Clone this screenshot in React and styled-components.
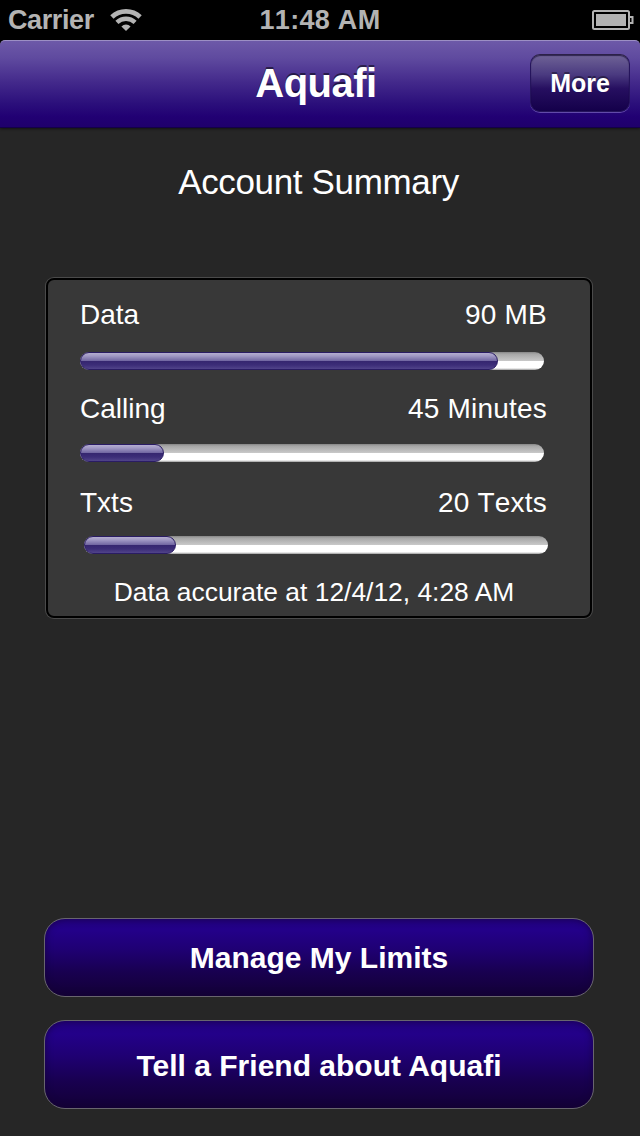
import React from 'react';
import styled, { createGlobalStyle } from 'styled-components';

const GlobalStyle = createGlobalStyle`
  * {
    box-sizing: border-box;
  }

  body {
    margin: 0;
    background: #262626;
    font-family: "Liberation Sans", Arial, Helvetica, sans-serif;
  }
`;

const Screen = styled.div`
  display: flex;
  flex-direction: column;
  width: 640px;
  height: 1136px;
  background: #262626;
  color: #fff;
  overflow: hidden;
`;

/* also the black that shows behind the rounded nav corners */
const Top = styled.header`
  background: #000;
`;

const StatusBar = styled.div`
  display: grid;
  grid-template-columns: 1fr auto 1fr;
  align-items: center;
  height: 40px;
  padding: 0 6px;
  color: #b3b3b3;
  font-size: 27px;
  font-weight: bold;
  line-height: 40px;
`;

const Carrier = styled.div`
  display: flex;
  align-items: center;
  gap: 16px;
  padding-left: 2px;
  letter-spacing: -0.4px;
`;

const Clock = styled.div`
  font-kerning: none;
  letter-spacing: 0.3px;
`;

const BatteryIcon = styled.svg`
  justify-self: end;
`;

const NavBar = styled.nav`
  display: grid;
  grid-template-columns: 1fr auto 1fr;
  align-items: center;
  height: 88px;
  padding: 0 10px 2px 2px;
  border-top: 1px solid #9c8fc4;
  border-bottom: 1px solid #14004a;
  border-radius: 5px 5px 0 0;
  background: linear-gradient(#6d59a8 0%, #5f4a9f 20%, #43298b 48%, #2b0f7b 73%, #210073 88%, #1f006c 100%);
  box-shadow: 0 1px 3px rgba(0, 0, 0, 0.5);
`;

const Title = styled.h1`
  grid-column: 2;
  margin: 0;
  font-size: 40px;
  line-height: 48px;
  letter-spacing: -0.5px;
  text-shadow: 0 -2px 0 rgba(0, 0, 0, 0.5);
`;

const MoreButton = styled.button`
  justify-self: end;
  width: 100px;
  height: 58px;
  padding: 1px 0 0;
  border: 1px solid #25145c;
  border-top-color: #2c2148;
  border-radius: 10px;
  background: linear-gradient(#6f6396 0%, #4a3a80 35%, #260f60 60%, #14004a 100%);
  box-shadow: inset 0 1px 1px rgba(20, 10, 50, 0.7), 0 1px 0 rgba(140, 120, 205, 0.6);
  color: #fff;
  font: bold 25px "Liberation Sans", Arial, sans-serif;
  text-shadow: 0 -2px 0 rgba(0, 0, 0, 0.4);
`;

const Main = styled.main`
  display: flex;
  flex: 1;
  flex-direction: column;
  padding: 34px 46px 27px 44px;
`;

const Heading = styled.h2`
  margin: 0 1px 76px 0;
  font-size: 35px;
  font-weight: normal;
  line-height: 40px;
  letter-spacing: -0.35px;
  text-align: center;
`;

const Panel = styled.section`
  width: 546px;
  height: 340px;
  margin-left: 2px;
  padding: 19px 42px 0 32px;
  border: 2px solid #000;
  border-radius: 8px;
  background: #383838;
  box-shadow: 0 0 0 1px #4a4a4a;
`;

const Meter = styled.div`
  display: flex;
  flex-direction: column;
  gap: ${(props) => props.$gap}px;
  margin-bottom: ${(props) => props.$after}px;
`;

const MeterText = styled.div`
  display: flex;
  justify-content: space-between;
  width: 467px;
  font-size: 28px;
  line-height: 32px;
`;

const Value = styled.span`
  font-kerning: none;
  letter-spacing: 0.2px;
`;

const Track = styled.div`
  width: 464px;
  height: 18px;
  margin-left: ${(props) => props.$shift || 0}px;
  border-radius: 9px;
  background: linear-gradient(#858585 0, #a6a6a6 2px, #c9c9c9 9px, #fff 9px, #fff 16px, #9a9a9a 18px);
`;

const Fill = styled.div`
  height: 18px;
  border: 1px solid #2a1c63;
  border-radius: 9px;
  background: linear-gradient(#b5aed0 0, #a098c4 3px, #6f64a0 8px, #35266f 8px, #3c2d78 12px, #51448a 16px);
`;

const Note = styled.p`
  margin: 0;
  font-size: 26.4px;
  line-height: 32px;
  text-align: center;
`;

const Actions = styled.div`
  display: flex;
  flex-direction: column;
  gap: 23px;
  margin-top: auto;
`;

const ActionButton = styled.button`
  height: ${(props) => props.$height}px;
  padding: ${(props) => props.$drop || 0}px 0 0;
  border: 1px solid #68656e;
  border-radius: 21px;
  background: linear-gradient(#220080 0%, #230089 15%, #1f0073 40%, #18004f 70%, #130036 100%);
  box-shadow: inset 0 0 7px rgba(20, 0, 50, 0.7);
  color: #fff;
  font: bold 30px "Liberation Sans", Arial, sans-serif;
`;

const meters = [
  { label: 'Data', value: '90 MB', fill: 418, gap: 21, after: 23 },
  { label: 'Calling', value: '45 Minutes', fill: 84, gap: 19, after: 25 },
  { label: 'Txts', value: '20 Texts', fill: 92, gap: 17, after: 22, shift: 4 },
];

const Wifi = () => (
  <svg width="32" height="24" viewBox="0 0 32 24" fill="none" stroke="#b3b3b3">
    <path d="M1.9 9A20.6 20.6 0 0 1 30.1 9" strokeWidth="4.8" />
    <path d="M6.9 14.4A13.2 13.2 0 0 1 25.1 14.4" strokeWidth="4.4" />
    <path d="M11.4 18.4A6.5 6.5 0 0 1 20.6 18.4L16 23Z" fill="#b3b3b3" stroke="none" />
  </svg>
);

const Battery = () => (
  <BatteryIcon width="42" height="20" viewBox="0 0 42 20" fill="none">
    <rect x="1" y="1" width="36" height="18" rx="1.5" stroke="#b3b3b3" strokeWidth="2" />
    <rect x="4" y="4" width="30" height="12" fill="#b3b3b3" />
    <path d="M38 7H40.5V13H38" stroke="#b3b3b3" strokeWidth="2" />
  </BatteryIcon>
);

const App = () => {
  return (
    <Screen>
      <GlobalStyle />
      <Top>
        <StatusBar>
          <Carrier>
            Carrier
            <Wifi />
          </Carrier>
          <Clock>11:48 AM</Clock>
          <Battery />
        </StatusBar>
        <NavBar>
          <Title>Aquafi</Title>
          <MoreButton>More</MoreButton>
        </NavBar>
      </Top>

      <Main>
        <Heading>Account Summary</Heading>
        <Panel>
          {meters.map((meter) => (
            <Meter key={meter.label} $gap={meter.gap} $after={meter.after}>
              <MeterText>
                <span>{meter.label}</span>
                <Value>{meter.value}</Value>
              </MeterText>
              <Track $shift={meter.shift}>
                <Fill style={{ width: meter.fill }} />
              </Track>
            </Meter>
          ))}
          <Note>Data accurate at 12/4/12, 4:28 AM</Note>
        </Panel>
        <Actions>
          <ActionButton $height={79}>Manage My Limits</ActionButton>
          <ActionButton $height={89} $drop={2}>Tell a Friend about Aquafi</ActionButton>
        </Actions>
      </Main>
    </Screen>
  );
};

export default App;
